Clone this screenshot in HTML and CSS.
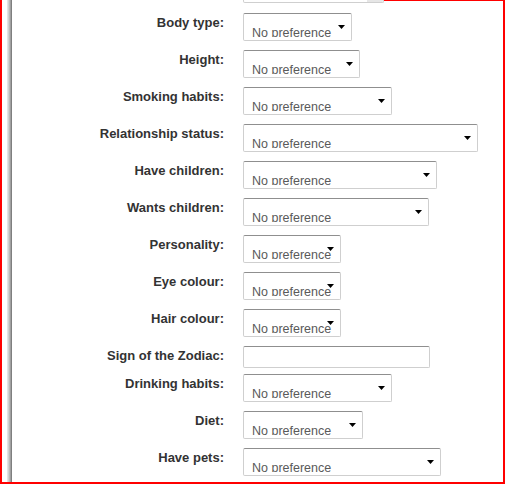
FILE: index.html
```html
<!DOCTYPE html>
<html>
<head>
<meta charset="utf-8">
<link rel="stylesheet" href="styles.css">
</head>
<body>
<div class="frame">
  <div class="edge"></div>
  <div class="form">
    <div class="row row-cut">
      <span class="label"></span>
      <div class="select w141 cut"><span class="btn"></span></div>
    </div>
    <div class="row">
      <label class="label">Body type:</label>
      <div class="select w109"><span class="val">No preference</span><span class="arrow"></span></div>
    </div>
    <div class="row">
      <label class="label">Height:</label>
      <div class="select w117"><span class="val">No preference</span><span class="arrow"></span></div>
    </div>
    <div class="row">
      <label class="label">Smoking habits:</label>
      <div class="select w149"><span class="val">No preference</span><span class="arrow"></span></div>
    </div>
    <div class="row">
      <label class="label">Relationship status:</label>
      <div class="select w235"><span class="val">No preference</span><span class="arrow"></span></div>
    </div>
    <div class="row">
      <label class="label">Have children:</label>
      <div class="select w194"><span class="val">No preference</span><span class="arrow"></span></div>
    </div>
    <div class="row">
      <label class="label">Wants children:</label>
      <div class="select w186"><span class="val">No preference</span><span class="arrow"></span></div>
    </div>
    <div class="row">
      <label class="label">Personality:</label>
      <div class="select w98"><span class="val">No preference</span><span class="arrow"></span></div>
    </div>
    <div class="row">
      <label class="label">Eye colour:</label>
      <div class="select w98"><span class="val">No preference</span><span class="arrow"></span></div>
    </div>
    <div class="row">
      <label class="label">Hair colour:</label>
      <div class="select w98"><span class="val">No preference</span><span class="arrow"></span></div>
    </div>
    <div class="row row-input">
      <label class="label">Sign of the Zodiac:</label>
      <div class="input w187"></div>
    </div>
    <div class="row">
      <label class="label">Drinking habits:</label>
      <div class="select w149"><span class="val">No preference</span><span class="arrow"></span></div>
    </div>
    <div class="row">
      <label class="label">Diet:</label>
      <div class="select w120"><span class="val">No preference</span><span class="arrow"></span></div>
    </div>
    <div class="row">
      <label class="label">Have pets:</label>
      <div class="select w198"><span class="val">No preference</span><span class="arrow"></span></div>
    </div>
  </div>
</div>
</body>
</html>
```
FILE: styles.css
```css
html, body {
  margin: 0;
  padding: 0;
  background: #fff;
}

.frame {
  width: 505px;
  height: 484px;
  box-sizing: border-box;
  border: 2px solid #ff0000;
  border-top: 0;
  display: flex;
  overflow: hidden;
}

.edge {
  flex: 0 0 10px;
  background: linear-gradient(to right, #fff 0, #fff 5px, #ececec 5px, #c8c8c8 7px, #a0a0a0 8.5px, #6e6e6e 10px);
}

.form {
  flex: 1;
  position: relative;
  display: flex;
  flex-direction: column;
}

.form::before {
  content: "";
  position: absolute;
  top: 0;
  left: 231px;
  right: 0;
  height: 1px;
  background: #ff0000;
}

.row {
  display: grid;
  grid-template-columns: 212px auto;
  column-gap: 19px;
  justify-content: start;
  align-items: start;
  margin-bottom: 9px;
}

.row-cut {
  margin-top: -25px;
  margin-bottom: 10px;
}

.row-input {
  margin-bottom: 6px;
}

.label {
  text-align: right;
  font-family: "Liberation Sans", Arial, sans-serif;
  font-weight: bold;
  font-size: 13px;
  line-height: 15px;
  color: #333;
  padding-top: 2px;
}

.select,
.input {
  position: relative;
  box-sizing: border-box;
  height: 28px;
  border: 1px solid #cfcfcf;
  border-top-color: #8f8f8f;
  border-radius: 2px;
  background: #fff;
  padding-left: 8px;
  overflow: hidden;
}

.input {
  height: 22px;
}

.cut {
  z-index: 1;
}

.btn {
  position: absolute;
  right: 0;
  top: 0;
  bottom: 0;
  width: 16px;
  background: #e6e6e6;
}

.val {
  display: block;
  margin-top: 12px;
  height: 11px;
  overflow: hidden;
  white-space: nowrap;
  font-family: "Liberation Sans", Arial, sans-serif;
  font-size: 12.5px;
  line-height: 15px;
  color: #5a5a5a;
}

.arrow {
  position: absolute;
  right: 6px;
  top: 11px;
  width: 7px;
  height: 4px;
  background: #000;
  clip-path: polygon(0 0, 100% 0, 50% 100%);
}

.w98 { width: 98px; }
.w109 { width: 109px; }
.w117 { width: 117px; }
.w120 { width: 120px; }
.w141 { width: 141px; }
.w149 { width: 149px; }
.w186 { width: 186px; }
.w187 { width: 187px; }
.w194 { width: 194px; }
.w198 { width: 198px; }
.w235 { width: 235px; }
```
